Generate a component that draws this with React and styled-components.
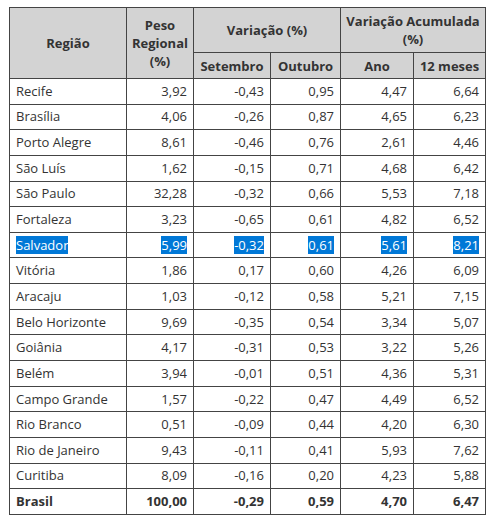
import styled, { createGlobalStyle } from "styled-components";

const rows = [
  ["Recife", "3,92", "-0,43", "0,95", "4,47", "6,64"],
  ["Brasília", "4,06", "-0,26", "0,87", "4,65", "6,23"],
  ["Porto Alegre", "8,61", "-0,46", "0,76", "2,61", "4,46"],
  ["São Luís", "1,62", "-0,15", "0,71", "4,68", "6,42"],
  ["São Paulo", "32,28", "-0,32", "0,66", "5,53", "7,18"],
  ["Fortaleza", "3,23", "-0,65", "0,61", "4,82", "6,52"],
  ["Salvador", "5,99", "-0,32", "0,61", "5,61", "8,21"],
  ["Vitória", "1,86", "0,17", "0,60", "4,26", "6,09"],
  ["Aracaju", "1,03", "-0,12", "0,58", "5,21", "7,15"],
  ["Belo Horizonte", "9,69", "-0,35", "0,54", "3,34", "5,07"],
  ["Goiânia", "4,17", "-0,31", "0,53", "3,22", "5,26"],
  ["Belém", "3,94", "-0,01", "0,51", "4,36", "5,31"],
  ["Campo Grande", "1,57", "-0,22", "0,47", "4,49", "6,52"],
  ["Rio Branco", "0,51", "-0,09", "0,44", "4,20", "6,30"],
  ["Rio de Janeiro", "9,43", "-0,11", "0,41", "5,93", "7,62"],
  ["Curitiba", "8,09", "-0,16", "0,20", "4,23", "5,88"],
];

const total = ["Brasil", "100,00", "-0,29", "0,59", "4,70", "6,47"];
const widths = [117, 67, 77, 70, 73, 72];

export default function App() {
  return (
    <>
      <GlobalStyle />
      <Page>
        <Table>
          <colgroup>
            {widths.map((w, i) => (
              <col key={i} style={{ width: w }} />
            ))}
          </colgroup>
          <thead>
            <TopRow>
              <Th rowSpan={2}>Região</Th>
              <Th rowSpan={2}>
                Peso
                <br />
                Regional
                <br />
                (%)
              </Th>
              <Th colSpan={2}>Variação (%)</Th>
              <Th colSpan={2}>
                Variação Acumulada
                <br />
                (%)
              </Th>
            </TopRow>
            <SubRow>
              <Th>Setembro</Th>
              <Th>Outubro</Th>
              <Th>Ano</Th>
              <Th>12 meses</Th>
            </SubRow>
          </thead>
          <tbody>
            {rows.map((r) => {
              const sel = r[0] === "Salvador";
              return (
                <tr key={r[0]}>
                  {r.map((v, i) => (
                    <Td key={i} $num={i > 0}>
                      {sel ? <Selected>{v}</Selected> : v}
                    </Td>
                  ))}
                </tr>
              );
            })}
            <tr>
              {total.map((v, i) => (
                <Td key={i} $num={i > 0} $bold>
                  {v}
                </Td>
              ))}
            </tr>
          </tbody>
        </Table>
      </Page>
    </>
  );
}

const GlobalStyle = createGlobalStyle`
  body {
    margin: 0;
    background: #fff;
    font-family: "Open Sans", "Liberation Sans", sans-serif;
    color: #333;
  }
`;

const Page = styled.div`
  padding: 7px 0 0 9px;
`;

const Table = styled.table`
  border-collapse: collapse;
  table-layout: fixed;
  width: 476px;
  font-size: 13px;
`;

const TopRow = styled.tr`
  height: 45px;
`;

const SubRow = styled.tr`
  height: 26px;
`;

const Th = styled.th`
  background: #d3d3d3;
  border: 1px solid #444;
  font-weight: 700;
  line-height: 18px;
  padding: 0 4px;
  text-align: center;
  vertical-align: middle;
`;

const Td = styled.td`
  border: 1px solid #444;
  height: 24.65px;
  padding: 0 6px;
  line-height: 19px;
  text-align: ${(p) => (p.$num ? "right" : "left")};
  font-weight: ${(p) => (p.$bold ? 700 : 400)};
  white-space: nowrap;
`;

const Selected = styled.span`
  background: #0078d7;
  color: #fff;
`;
